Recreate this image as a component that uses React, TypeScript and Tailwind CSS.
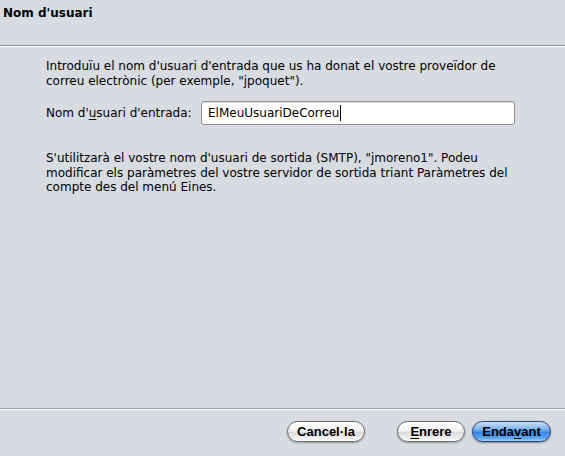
const font = { fontFamily: '"DejaVu Sans", Verdana, sans-serif' };

const AquaButton = ({
  children,
  width,
  primary = false,
}: {
  children: React.ReactNode;
  width: string;
  primary?: boolean;
}) => (
  <button
    className={
      primary
        ? `${width} h-[21px] rounded-full border border-[#23437a] bg-[linear-gradient(to_bottom,#c9e0fa_0%,#78b0ee_40%,#3b86e2_55%,#5ea6ee_85%,#a6d2fb_100%)] text-[13px] font-bold text-black shadow-[0_1px_2px_rgba(0,0,0,0.4)]`
        : `${width} h-[21px] rounded-full border border-[#6a6a6a] bg-[linear-gradient(to_bottom,#ffffff_0%,#f4f4f4_45%,#dcdcdc_55%,#eeeeee_85%,#ffffff_100%)] text-[13px] font-bold text-black shadow-[0_1px_2px_rgba(0,0,0,0.3)]`
    }
    style={{ fontFamily: '"Liberation Sans", Arial, sans-serif' }}
  >
    {children}
  </button>
);

export default function App() {
  return (
    <div className="flex h-[456px] w-[565px] flex-col bg-[#d8dbe2] text-[12px] text-black" style={font}>
      <div className="h-[45px] pl-[3px] pt-[6px] font-bold leading-[15px]">Nom d'usuari</div>
      <div className="h-px bg-[#8a8a8a]" />
      <div className="h-px bg-white" />

      <div className="flex flex-1 flex-col pl-[46px] pr-[40px] pt-[12px]">
        <p className="leading-[15px]">
          Introduïu el nom d'usuari d'entrada que us ha donat el vostre proveïdor de correu electrònic (per
          exemple, "jpoquet").
        </p>

        <div className="mt-[12px] flex items-center">
          <span className="w-[155px] leading-[15px]">
            Nom d'<span className="underline underline-offset-2">u</span>suari d'entrada:
          </span>
          <div className="flex h-[24px] w-[314px] items-center rounded-[3px] border border-[#8f8f8f] bg-white pl-[6px] shadow-[inset_0_1px_1px_rgba(0,0,0,0.15)]">
            <span className="leading-[15px]">ElMeuUsuariDeCorreu</span>
            <span className="ml-px h-[16px] w-px bg-black" />
          </div>
        </div>

        <p className="mt-[26px] leading-[14.5px]">
          S'utilitzarà el vostre nom d'usuari de sortida (SMTP), "jmoreno1". Podeu modificar els paràmetres del
          vostre servidor de sortida triant Paràmetres del compte des del menú Eines.
        </p>
      </div>

      <div className="h-px bg-[#a0a0a0]" />
      <div className="h-px bg-white" />
      <div className="flex h-[46px] items-center justify-end pb-[3px] pr-[14px]">
        <AquaButton width="w-[78px]">Cancel·la</AquaButton>
        <div className="w-[32px]" />
        <AquaButton width="w-[68px]">
          <span className="underline underline-offset-2">E</span>nrere
        </AquaButton>
        <div className="w-[7px]" />
        <AquaButton width="w-[79px]" primary>
          Enda<span className="underline underline-offset-2">v</span>ant
        </AquaButton>
      </div>
    </div>
  );
}
